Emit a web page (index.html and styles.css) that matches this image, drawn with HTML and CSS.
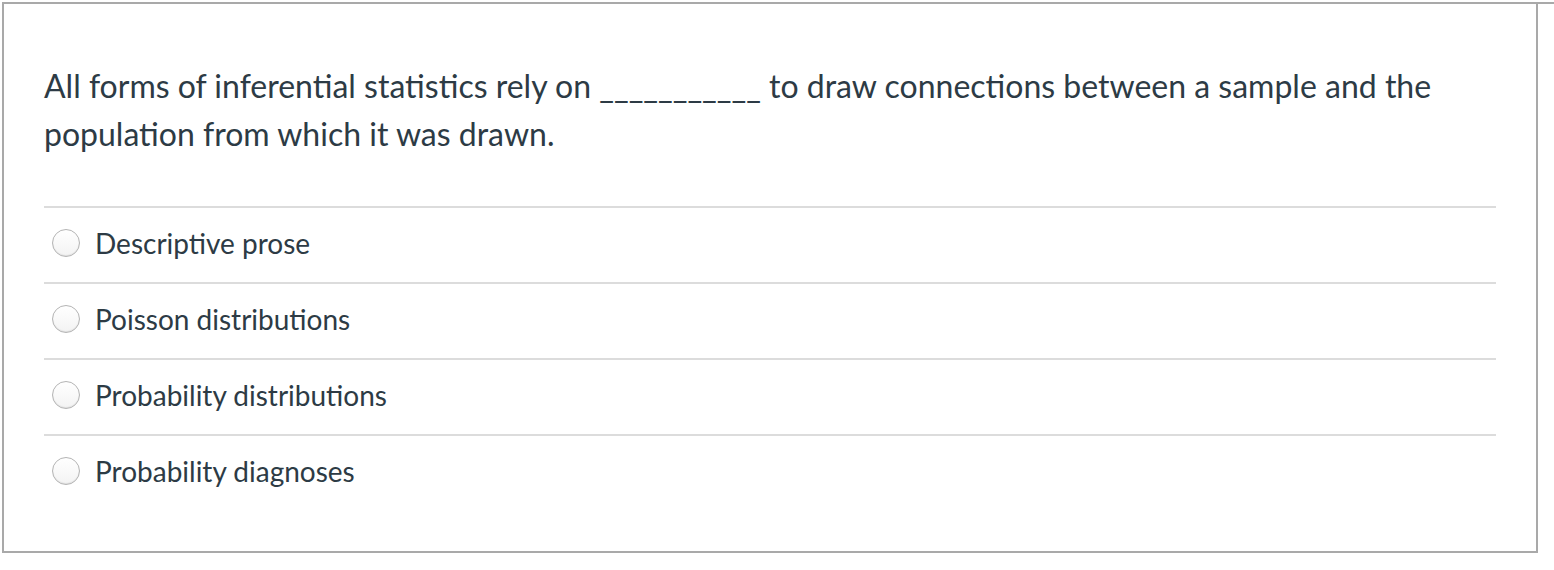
FILE: index.html
```
<!DOCTYPE html>
<html>
<head>
<meta charset="utf-8">
<link rel="stylesheet" href="styles.css">
</head>
<body>
<div class="question">
  <div class="topline"></div>
  <div class="content">
    <p class="prompt">All forms of inferential statistics rely on ___________ to draw connections between a sample and the population from which it was drawn.</p>
    <div class="answers">
      <label class="answer"><span class="radio"></span><span class="label">Descriptive prose</span></label>
      <label class="answer"><span class="radio"></span><span class="label">Poisson distributions</span></label>
      <label class="answer"><span class="radio"></span><span class="label">Probability distributions</span></label>
      <label class="answer"><span class="radio"></span><span class="label">Probability diagnoses</span></label>
    </div>
  </div>
</div>
</body>
</html>
```
FILE: styles.css
```
html, body {
  margin: 0;
  padding: 0;
  background: #fff;
}
body {
  font-family: Lato, "Noto Sans", sans-serif;
  color: #2d3b45;
}
.question {
  margin-left: 2px;
  width: 1532px;
  height: 549px;
  border-left: 2px solid #a9a9a9;
  border-right: 2px solid #a9a9a9;
  border-bottom: 2px solid #a9a9a9;
}
.topline {
  height: 2px;
  margin-top: 2px;
  margin-right: -20px;
  background: #a9a9a9;
}
.content {
  padding: 58px 40px 0 40px;
}
.prompt {
  margin: 0 0 48px 0;
  font-size: 32px;
  line-height: 48px;
}
.answers {
  display: flex;
  flex-direction: column;
}
.answer {
  display: flex;
  align-items: center;
  gap: 15px;
  height: 69px;
  padding-bottom: 5px;
  border-top: 2px solid #dcdcdc;
  padding-left: 8px;
  font-size: 28px;
}
.radio {
  width: 26px;
  height: 26px;
  border-radius: 50%;
  border: 1px solid #b4b4b4;
  background: linear-gradient(#ffffff, #f3f3f3);
  box-shadow: inset 0 -1px 1px rgba(0,0,0,0.08);
  flex: none;
  margin-top: 1px;
}
.label {
  line-height: 1;
}
```
